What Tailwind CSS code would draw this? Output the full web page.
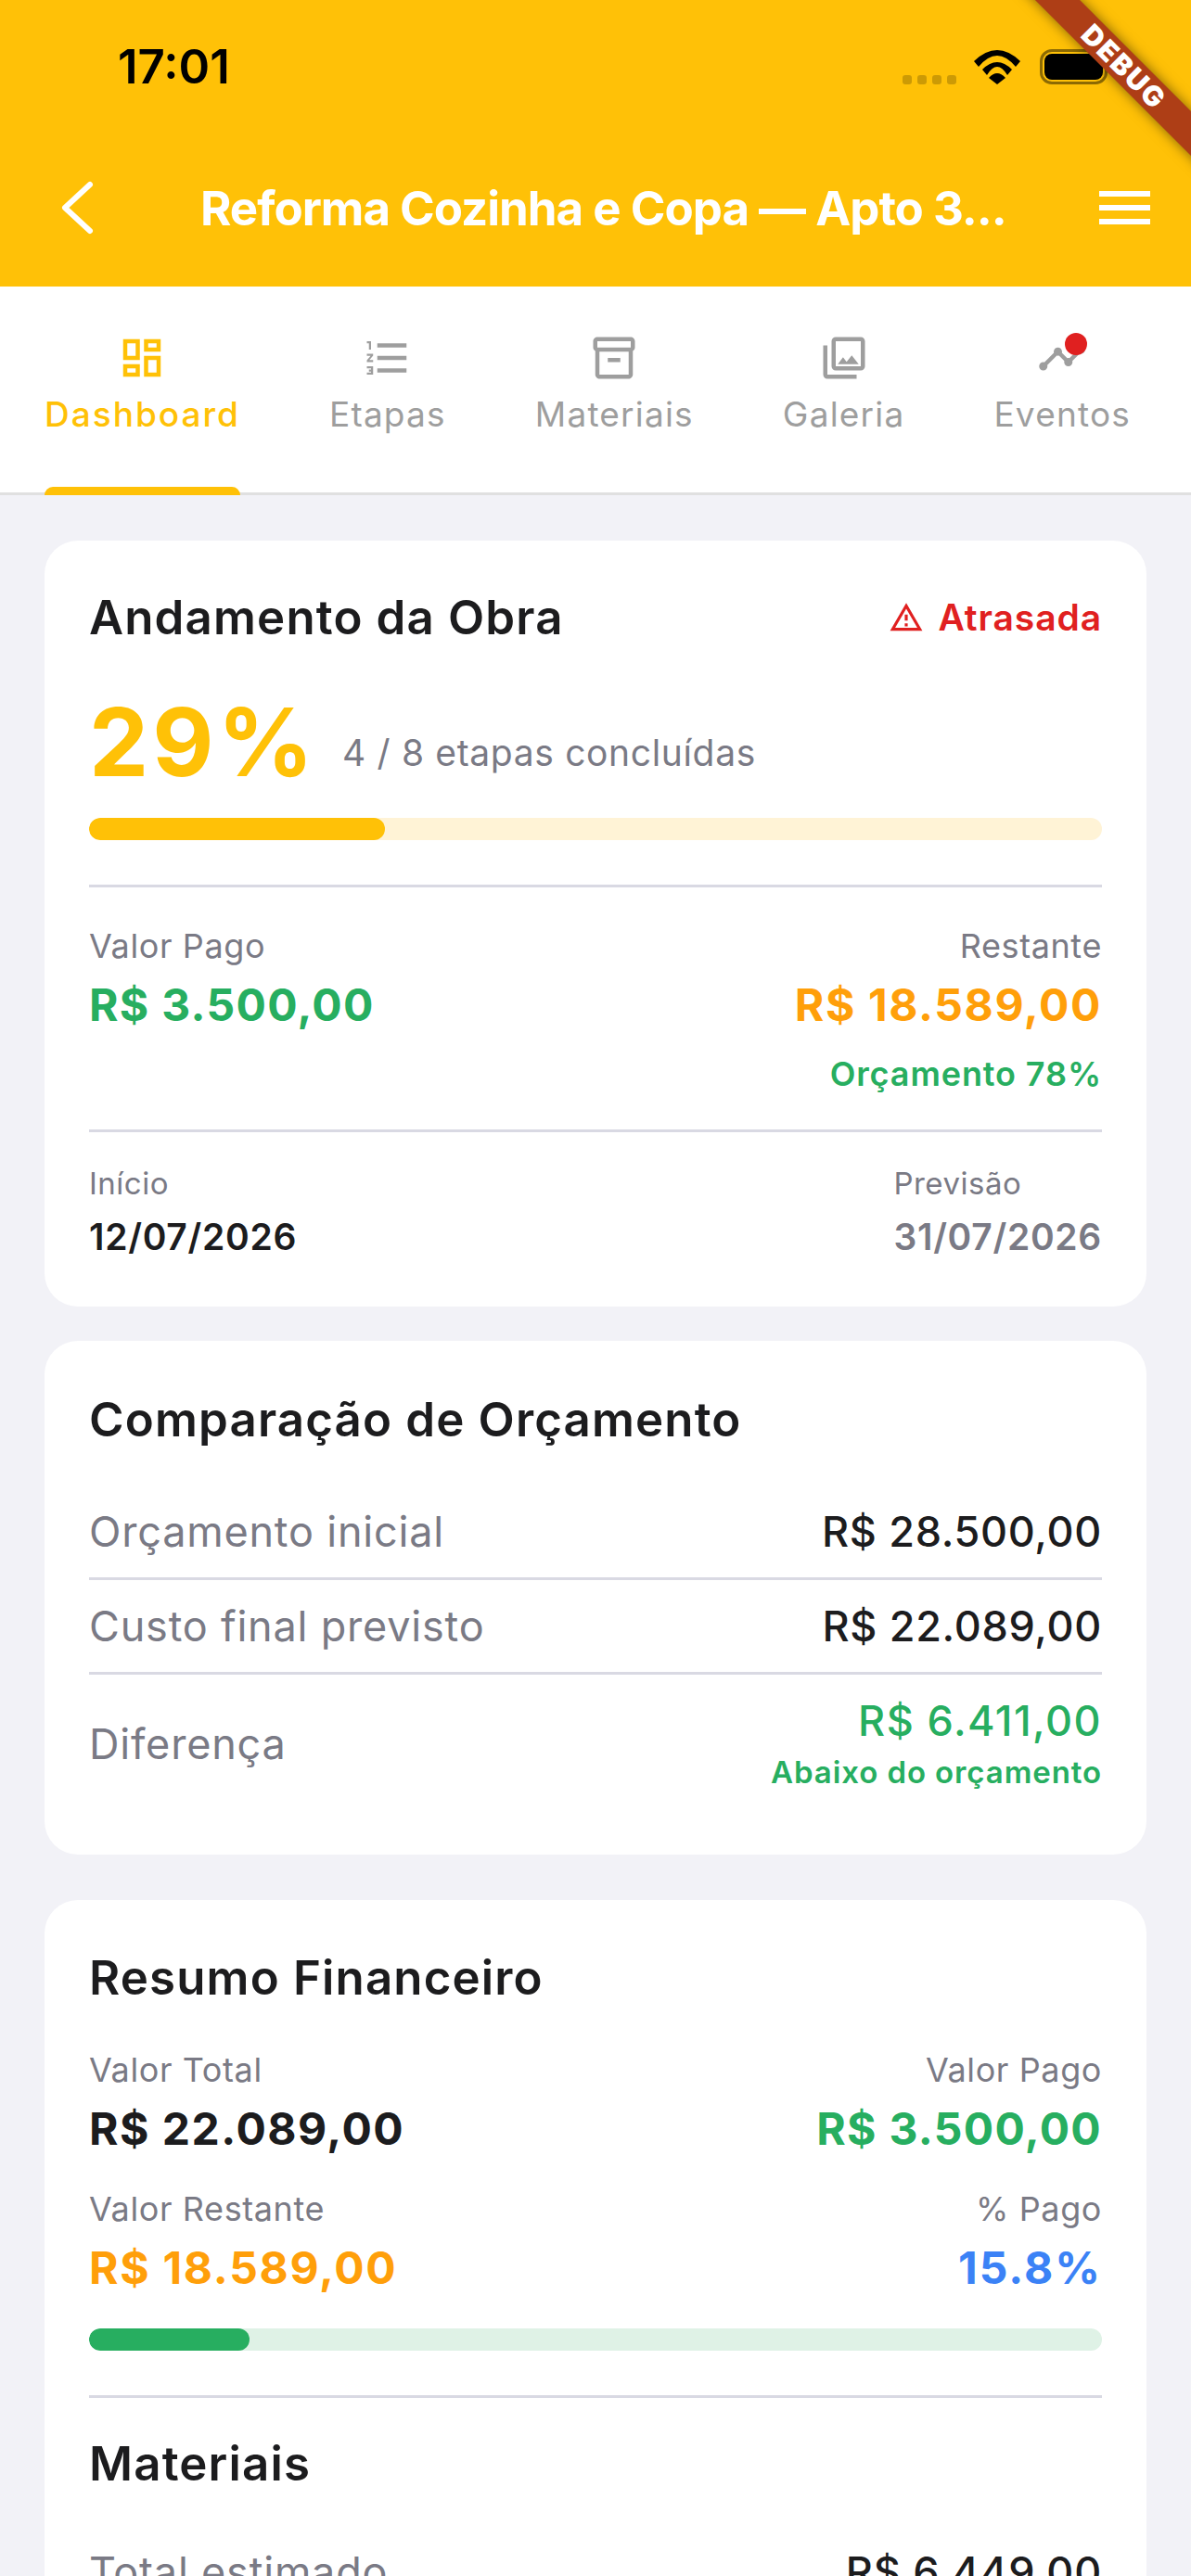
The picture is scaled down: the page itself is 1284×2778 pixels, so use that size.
<!DOCTYPE html>
<html>
<head>
    <meta charset='utf-8'>
    <title>Dashboard da Obra</title>
    <script src="https://cdn.jsdelivr.net/npm/@tailwindcss/browser@4"></script>
</head>
<body class="bg-[#F2F2F7] font-['Inter',sans-serif]">
<div class="relative w-[1284px] h-[2778px] overflow-hidden">

    <!-- Header -->
    <div class="bg-[#FFC107] h-[309px]">
        <div class="flex items-center h-[144px] pl-[127px] pr-[90px]">
            <span class="text-[51px] leading-[60px] font-semibold text-black">17:01</span>
            <div class="ml-auto flex items-center">
                <div class="flex gap-[6px] mt-[28px] mr-[19px]">
                    <div class="w-[10px] h-[10px] rounded-[3px] bg-black/20"></div>
                    <div class="w-[10px] h-[10px] rounded-[3px] bg-black/20"></div>
                    <div class="w-[10px] h-[10px] rounded-[3px] bg-black/20"></div>
                    <div class="w-[10px] h-[10px] rounded-[3px] bg-black/20"></div>
                </div>
                <svg class="w-[50px] h-[37px] mr-[21px]" viewBox="0 0 50 37" fill="#000">
                    <path d="M0 12Q25-12 50 12L45 18Q25-6 5 18Z"/>
                    <path d="M9 21Q25 5 41 21L36 27Q25 9 14 27Z"/>
                    <path d="M16 30Q25 20 34 30L25 37Z"/>
                </svg>
                <div class="relative w-[73px] h-[38px] rounded-[13px] border-[3px] border-black/45 p-[2px]">
                    <div class="w-full h-full rounded-[8px] bg-black"></div>
                </div>
            </div>
        </div>
        <div class="flex items-center h-[165px]">
            <svg class="w-[40px] h-[60px] ml-[64px] mb-[6px]" viewBox="0 0 40 60" fill="none" stroke="#fff" stroke-width="6" stroke-linecap="round" stroke-linejoin="round">
                <path d="M33 5L6 30L33 55"/>
            </svg>
            <span class="ml-[112px] text-[51px] leading-[64px] font-bold text-white tracking-[-1px] mb-[4px] whitespace-nowrap">Reforma Cozinha e Copa — Apto 3...</span>
            <div class="ml-auto mr-[44px] mb-[6px] flex flex-col gap-[9px]">
                <div class="w-[55px] h-[6px] bg-white"></div>
                <div class="w-[55px] h-[6px] bg-white"></div>
                <div class="w-[55px] h-[6px] bg-white"></div>
            </div>
        </div>
    </div>

    <!-- Tabs -->
    <div class="bg-white h-[225px] border-b-[3px] border-[#E0E0E0] flex gap-[96px] px-[48px]">
        <div class="relative h-[225px] flex flex-col items-center pt-[50px]">
            <svg class="w-[54px] h-[54px]" viewBox="0 0 24 24" fill="#FFC107"><path d="M19 5v2h-4V5h4M9 5v6H5V5h4m10 8v6h-4v-6h4M9 17v2H5v-2h4M21 3h-8v6h8V3zM11 3H3v10h8V3zm10 8h-8v10h8V11zm-10 4H3v6h8v-6z"/></svg>
            <span class="mt-[10px] text-[37px] leading-[48px] font-medium tracking-[2px] text-[#FFC107]">Dashboard</span>
            <div class="absolute left-0 right-0 bottom-0 h-[9px] rounded-t-[9px] bg-[#FFC107]"></div>
        </div>
        <div class="flex flex-col items-center pt-[50px]">
            <svg class="w-[54px] h-[54px]" viewBox="0 0 24 24" fill="#9E9E9E"><path d="M2 17h2v.5H3v1h1v.5H2v1h3v-4H2v1zm1-9h1V4H2v1h1v3zm-1 3h1.8L2 13.1v.9h3v-1H3.2L5 10.9V10H2v1zm5-6v2h14V5H7zm0 14h14v-2H7v2zm0-6h14v-2H7v2z"/></svg>
            <span class="mt-[10px] text-[37px] leading-[48px] tracking-[1.2px] text-[#9E9E9E]">Etapas</span>
        </div>
        <div class="flex flex-col items-center pt-[50px]">
            <svg class="w-[54px] h-[54px]" viewBox="0 0 24 24" fill="#9E9E9E"><path d="M20 2H4c-1 0-2 .9-2 2v3.01c0 .72.43 1.34 1 1.69V20c0 1.1 1.1 2 2 2h14c.9 0 2-.9 2-2V8.7c.57-.35 1-.97 1-1.69V4c0-1.1-1-2-2-2zm-1 18H5V9h14v11zm1-13H4V4h16v3z"/><path d="M9 12h6v2H9z"/></svg>
            <span class="mt-[10px] text-[37px] leading-[48px] tracking-[1.2px] text-[#9E9E9E]">Materiais</span>
        </div>
        <div class="flex flex-col items-center pt-[50px]">
            <svg class="w-[54px] h-[54px]" viewBox="0 0 24 24" fill="#9E9E9E"><path d="M20 4v12H8V4h12m0-2H8c-1.1 0-2 .9-2 2v12c0 1.1.9 2 2 2h12c1.1 0 2-.9 2-2V4c0-1.1-.9-2-2-2zm-8.5 9.67l1.69 2.26 2.48-3.1L19 15H9zM2 6v14c0 1.1.9 2 2 2h14v-2H4V6H2z"/></svg>
            <span class="mt-[10px] text-[37px] leading-[48px] tracking-[1.2px] text-[#9E9E9E]">Galeria</span>
        </div>
        <div class="flex flex-col items-center pt-[50px]">
            <div class="relative w-[54px] h-[54px]">
                <svg class="w-[54px] h-[54px]" viewBox="0 0 24 24" fill="#9E9E9E"><path d="M23 8c0 1.1-.9 2-2 2-.18 0-.35-.02-.51-.07l-3.56 3.55c.05.16.07.34.07.52 0 1.1-.9 2-2 2s-2-.9-2-2c0-.18.02-.36.07-.52l-2.55-2.55c-.16.05-.34.07-.52.07s-.36-.02-.52-.07l-4.55 4.56c.05.16.07.33.07.51 0 1.1-.9 2-2 2s-2-.9-2-2 .9-2 2-2c.18 0 .35.02.51.07l4.56-4.55C8.02 9.36 8 9.18 8 9c0-1.1.9-2 2-2s2 .9 2 2c0 .18-.02.36-.07.52l2.55 2.55c.16-.05.34-.07.52-.07s.36.02.52.07l3.55-3.56C19.02 8.35 19 8.18 19 8c0-1.1.9-2 2-2s2 .9 2 2z"/></svg>
                <div class="absolute top-0 right-0 w-[24px] h-[24px] rounded-full bg-[#E02020]"></div>
            </div>
            <span class="mt-[10px] text-[37px] leading-[48px] tracking-[1.2px] text-[#9E9E9E]">Eventos</span>
        </div>
    </div>

    <!-- Content -->
    <div class="px-[48px] pt-[49px]">

        <!-- Andamento da Obra -->
        <div class="bg-white rounded-[36px] px-[48px] pt-[50px] pb-[51px]">
            <div class="flex items-center justify-between">
                <h2 class="text-[51px] leading-[66px] font-semibold tracking-[1.15px] text-[#1C1C1E]">Andamento da Obra</h2>
                <div class="flex items-center gap-[16px]">
                    <svg class="w-[38px] h-[38px]" viewBox="0 0 24 24" fill="#E02020"><path d="M12 5.99L19.53 19H4.47L12 5.99M12 2L1 21h22L12 2zm1 14h-2v2h2v-2zm0-6h-2v4h2v-4z"/></svg>
                    <span class="text-[39px] leading-[66px] font-semibold tracking-[0.9px] text-[#E02020]">Atrasada</span>
                </div>
            </div>
            <div class="flex items-end gap-[27px] mt-[43px]">
                <span class="text-[102px] leading-[116px] font-bold tracking-[4px] text-[#FFC107]">29%</span>
                <span class="text-[39px] leading-[48px] tracking-[0.65px] text-[#7A7A85] mb-[22px]">4 / 8 etapas concluídas</span>
            </div>
            <div class="mt-[24px] h-[24px] rounded-full bg-[#FFF3D6] overflow-hidden">
                <div class="h-full rounded-[12px] bg-[#FFC107]" style="width:29.2%"></div>
            </div>
            <div class="mt-[48px] h-[3px] bg-[#D9D9E3]"></div>
            <div class="flex justify-between mt-[41px]">
                <div>
                    <p class="text-[36px] leading-[44px] tracking-[0.6px] text-[#7A7A85]">Valor Pago</p>
                    <p class="mt-[12px] text-[48px] leading-[60px] font-bold tracking-[1.3px] text-[#27AE60]">R$ 3.500,00</p>
                </div>
                <div class="text-right">
                    <p class="text-[36px] leading-[44px] tracking-[0.6px] text-[#7A7A85]">Restante</p>
                    <p class="mt-[12px] text-[48px] leading-[60px] font-bold tracking-[1.6px] text-[#FF9F0A]">R$ 18.589,00</p>
                    <p class="mt-[22px] text-[36px] leading-[44px] font-semibold tracking-[0.9px] text-[#27AE60]">Orçamento 78%</p>
                </div>
            </div>
            <div class="mt-[38px] h-[3px] bg-[#D9D9E3]"></div>
            <div class="flex justify-between mt-[35px]">
                <div>
                    <p class="text-[33px] leading-[40px] tracking-[0.5px] text-[#7A7A85]">Início</p>
                    <p class="mt-[14px] text-[39px] leading-[48px] font-semibold tracking-[0.7px] text-[#1C1C1E]">12/07/2026</p>
                </div>
                <div>
                    <p class="text-[33px] leading-[40px] tracking-[0.5px] text-[#7A7A85]">Previsão</p>
                    <p class="mt-[14px] text-[39px] leading-[48px] font-semibold tracking-[0.7px] text-[#7A7A85]">31/07/2026</p>
                </div>
            </div>
        </div>

        <!-- Comparação de Orçamento -->
        <div class="bg-white rounded-[36px] mt-[37px] px-[48px] pt-[52px] pb-[67px]">
            <h2 class="text-[51px] leading-[66px] font-semibold tracking-[1.15px] text-[#1C1C1E]">Comparação de Orçamento</h2>
            <div class="flex justify-between mt-[60px] text-[45px] leading-[56px] tracking-[0.8px]">
                <span class="text-[#7A7A85]">Orçamento inicial</span>
                <span class="font-medium tracking-[0.7px] text-[#1C1C1E]">R$ 28.500,00</span>
            </div>
            <div class="mt-[21px] h-[3px] bg-[#D9D9E3]"></div>
            <div class="flex justify-between mt-[22px] text-[45px] leading-[56px] tracking-[0.8px]">
                <span class="text-[#7A7A85]">Custo final previsto</span>
                <span class="font-medium tracking-[0.7px] text-[#1C1C1E]">R$ 22.089,00</span>
            </div>
            <div class="mt-[21px] h-[3px] bg-[#D9D9E3]"></div>
            <div class="flex items-center justify-between mt-[22px]">
                <span class="text-[45px] leading-[56px] tracking-[0.8px] text-[#7A7A85]">Diferença</span>
                <div class="text-right">
                    <p class="text-[45px] leading-[56px] font-medium tracking-[1.45px] text-[#27AE60]">R$ 6.411,00</p>
                    <p class="mt-[5px] text-[33px] leading-[44px] font-semibold tracking-[0.9px] text-[#27AE60]">Abaixo do orçamento</p>
                </div>
            </div>
        </div>

        <!-- Resumo Financeiro -->
        <div class="bg-white rounded-[36px] mt-[49px] px-[48px] pt-[51px] pb-[48px]">
            <h2 class="text-[51px] leading-[66px] font-semibold tracking-[1.15px] text-[#1C1C1E]">Resumo Financeiro</h2>
            <div class="flex justify-between mt-[44px]">
                <div>
                    <p class="text-[36px] leading-[44px] tracking-[0.6px] text-[#7A7A85]">Valor Total</p>
                    <p class="mt-[12px] text-[48px] leading-[60px] font-bold tracking-[1.5px] text-[#1C1C1E]">R$ 22.089,00</p>
                </div>
                <div class="text-right">
                    <p class="text-[36px] leading-[44px] tracking-[0.6px] text-[#7A7A85]">Valor Pago</p>
                    <p class="mt-[12px] text-[48px] leading-[60px] font-bold tracking-[1.3px] text-[#27AE60]">R$ 3.500,00</p>
                </div>
            </div>
            <div class="flex justify-between mt-[34px]">
                <div>
                    <p class="text-[36px] leading-[44px] tracking-[0.6px] text-[#7A7A85]">Valor Restante</p>
                    <p class="mt-[12px] text-[48px] leading-[60px] font-bold tracking-[1.7px] text-[#FF9F0A]">R$ 18.589,00</p>
                </div>
                <div class="text-right">
                    <p class="text-[36px] leading-[44px] tracking-[0.6px] text-[#7A7A85]">% Pago</p>
                    <p class="mt-[12px] text-[48px] leading-[60px] font-bold tracking-[2px] text-[#3B82F6]">15.8%</p>
                </div>
            </div>
            <div class="mt-[35px] h-[24px] rounded-full bg-[#DFF2E6] overflow-hidden">
                <div class="h-full rounded-[12px] bg-[#27AE60]" style="width:15.8%"></div>
            </div>
            <div class="mt-[48px] h-[3px] bg-[#D9D9E3]"></div>
            <h2 class="mt-[38px] text-[51px] leading-[66px] font-semibold tracking-[1.15px] text-[#1C1C1E]">Materiais</h2>
            <div class="flex justify-between mt-[56px] text-[45px] leading-[56px] tracking-[0.8px]">
                <span class="text-[#7A7A85]">Total estimado</span>
                <span class="font-medium text-[#1C1C1E]">R$ 6.449,00</span>
            </div>
        </div>
    </div>

    <!-- Debug banner -->
    <div class="absolute left-[1042px] top-[55px] w-[340px] h-[34px] rotate-45 bg-[#AE3E16] shadow-[0_0_14px_rgba(0,0,0,0.5)] flex items-center justify-center">
        <span class="text-[30px] leading-[34px] font-black text-white tracking-[2px]">DEBUG</span>
    </div>
</div>
</body>
</html>
